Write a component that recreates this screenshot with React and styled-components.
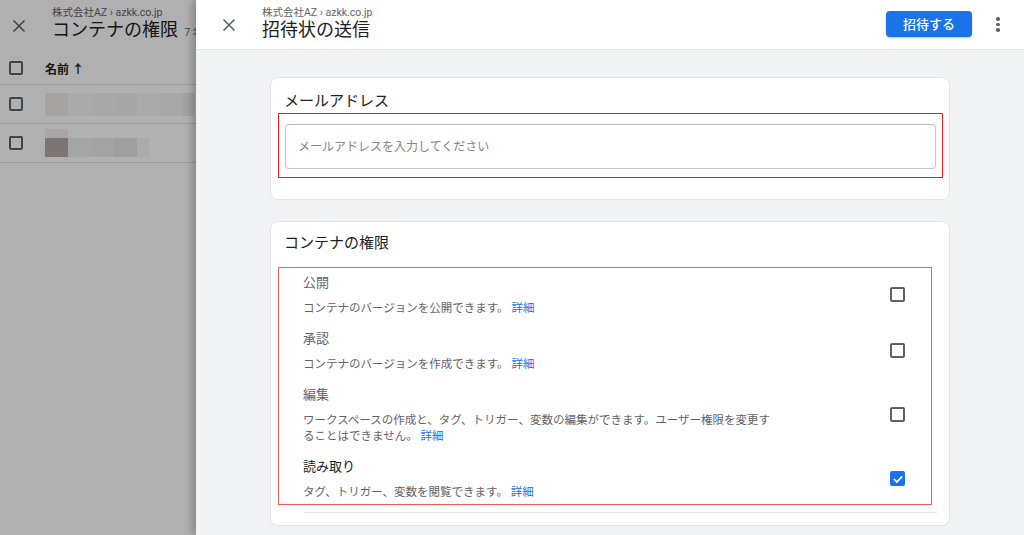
import React from 'react'
import styled, { createGlobalStyle } from 'styled-components'

const GlobalStyle = createGlobalStyle`
    html, body {
        margin: 0;
        padding: 0;
    }
    body {
        font-family: Roboto, "Noto Sans CJK JP", sans-serif;
        color: #202124;
    }
`

const permissions = [
    { title: '公開', desc: 'コンテナのバージョンを公開できます。', checked: false },
    { title: '承認', desc: 'コンテナのバージョンを作成できます。', checked: false },
    {
        title: '編集',
        desc: 'ワークスペースの作成と、タグ、トリガー、変数の編集ができます。ユーザー権限を変更することはできません。',
        checked: false,
    },
    { title: '読み取り', desc: 'タグ、トリガー、変数を閲覧できます。', checked: true },
]

const rowOne = [
    { w: 23, c: '#f3eded' },
    { w: 23, c: '#f6f6f6' },
    { w: 23, c: '#f3f3f3' },
    { w: 23, c: '#f1f1f1' },
    { w: 23, c: '#f6f6f6' },
    { w: 22, c: '#f2f2f2' },
    { w: 13, c: '#ececec' },
]

const rowTwo = [
    { w: 23, c: '#b5aaa8' },
    { w: 23, c: '#efefef' },
    { w: 23, c: '#ededed' },
    { w: 23, c: '#e6e6e6' },
    { w: 12, c: '#f7f7f7' },
]

const CloseIcon = ({ color }) => (
    <svg width="14" height="14" viewBox="0 0 14 14">
        <path d="M1.5 1.5 L12.5 12.5 M12.5 1.5 L1.5 12.5" stroke={color} strokeWidth="1.6" />
    </svg>
)

const App = () => {
    return (
        <Screen>
            <GlobalStyle />
            <BackPage>
                <BackHeader>
                    <IconButton>
                        <CloseIcon color="#5f6368" />
                    </IconButton>
                    <HeadText>
                        <Crumb>株式会社AZ › azkk.co.jp</Crumb>
                        <Title>
                            コンテナの権限 <Count>7 名</Count>
                        </Title>
                    </HeadText>
                </BackHeader>
                <TableHead>
                    <SmallBox />
                    <ColName>名前 ↑</ColName>
                </TableHead>
                <TableRow>
                    <SmallBox />
                    <Mosaic>
                        {rowOne.map((cell, i) => (
                            <Cell key={i} $w={cell.w} $h={23} $c={cell.c} />
                        ))}
                    </Mosaic>
                </TableRow>
                <TableRow>
                    <SmallBox />
                    <MosaicStack>
                        <Cell $w={23} $h={9} $c="#f7f0ef" />
                        <Mosaic>
                            {rowTwo.map((cell, i) => (
                                <Cell key={i} $w={cell.w} $h={19} $c={cell.c} />
                            ))}
                        </Mosaic>
                    </MosaicStack>
                </TableRow>
            </BackPage>

            <Scrim />

            <Drawer>
                <DrawerHeader>
                    <IconButton>
                        <CloseIcon color="#5f6368" />
                    </IconButton>
                    <HeadText>
                        <Crumb>株式会社AZ › azkk.co.jp</Crumb>
                        <Title>招待状の送信</Title>
                    </HeadText>
                    <Spacer />
                    <PrimaryButton>招待する</PrimaryButton>
                    <Kebab>
                        <Dot />
                        <Dot />
                        <Dot />
                    </Kebab>
                </DrawerHeader>

                <DrawerBody>
                    <Card>
                        <CardTitle $top={14}>メールアドレス</CardTitle>
                        <Highlight $color="#ff1a1a" $margin="2px 6px 21px 7px" $padding="10px 6px 8px 6px">
                            <EmailInput placeholder="メールアドレスを入力してください" />
                        </Highlight>
                    </Card>

                    <Card>
                        <CardTitle $top={12}>コンテナの権限</CardTitle>
                        <Highlight $color="#f45b5b" $margin="14px 17px 0 7px" $padding="5px 26px 4px 24px">
                            <PermList>
                                {permissions.map((p) => (
                                    <PermRow key={p.title}>
                                        <PermText>
                                            <PermTitle $active={p.checked}>{p.title}</PermTitle>
                                            <PermDesc>
                                                {p.desc} <Link>詳細</Link>
                                            </PermDesc>
                                        </PermText>
                                        <Checkbox $checked={p.checked}>
                                            {p.checked && (
                                                <svg width="12" height="12" viewBox="0 0 12 12">
                                                    <path
                                                        d="M2 6.2 L4.8 9 L10.2 3.4"
                                                        fill="none"
                                                        stroke="#fff"
                                                        strokeWidth="1.7"
                                                    />
                                                </svg>
                                            )}
                                        </Checkbox>
                                    </PermRow>
                                ))}
                            </PermList>
                        </Highlight>
                        <Divider />
                    </Card>
                </DrawerBody>
            </Drawer>
        </Screen>
    )
}

const Screen = styled.div`
    position: relative;
    width: 1024px;
    height: 535px;
    overflow: hidden;
    background: #ffffff;
`

const BackPage = styled.div`
    display: flex;
    flex-direction: column;
    width: 100%;
    height: 100%;
    background: #ffffff;
`

const BackHeader = styled.div`
    display: flex;
    align-items: center;
    height: 52px;
    padding-left: 5px;
`

const IconButton = styled.div`
    display: flex;
    align-items: center;
    justify-content: center;
    width: 28px;
    height: 28px;
    margin-right: 19px;
`

const HeadText = styled.div`
    display: flex;
    flex-direction: column;
    padding-bottom: 2px;
`

const Crumb = styled.div`
    font-size: 10.5px;
    line-height: 12px;
    color: #5f6368;
    white-space: nowrap;
`

const Title = styled.div`
    font-size: 18px;
    line-height: 22px;
    color: #202124;
    white-space: nowrap;
`

const Count = styled.span`
    font-size: 10px;
    color: #5f6368;
    margin-left: 2px;
`

const TableHead = styled.div`
    display: flex;
    align-items: center;
    height: 32px;
    padding-left: 9px;
    border-bottom: 1px solid #e0e0e0;
`

const TableRow = styled.div`
    display: flex;
    align-items: center;
    height: 38px;
    padding-left: 9px;
    border-bottom: 1px solid #e0e0e0;
`

const SmallBox = styled.div`
    width: 14px;
    height: 14px;
    box-sizing: border-box;
    border: 2px solid #5f6368;
    border-radius: 2px;
    margin-right: 22px;
`

const ColName = styled.div`
    font-size: 12px;
    font-weight: 700;
    color: #202124;
`

const Mosaic = styled.div`
    display: flex;
`

const MosaicStack = styled.div`
    display: flex;
    flex-direction: column;
`

const Cell = styled.div`
    width: ${(p) => p.$w}px;
    height: ${(p) => p.$h}px;
    background: ${(p) => p.$c};
`

const Scrim = styled.div`
    position: absolute;
    inset: 0;
    background: rgba(0, 0, 0, 0.31);
`

const Drawer = styled.div`
    position: absolute;
    top: 0;
    right: 0;
    bottom: 0;
    width: 828px;
    display: flex;
    flex-direction: column;
    background: #f1f3f4;
    box-shadow: -3px 0 9px rgba(0, 0, 0, 0.28);
`

const DrawerHeader = styled.div`
    display: flex;
    align-items: center;
    height: 50px;
    box-sizing: border-box;
    padding: 0 14px 0 19px;
    background: #ffffff;
    border-bottom: 1px solid #e3e5e7;
`

const Spacer = styled.div`
    flex: 1;
`

const PrimaryButton = styled.button`
    width: 86px;
    height: 26px;
    margin-top: -2px;
    border: none;
    border-radius: 4px;
    background: #1a73e8;
    color: #ffffff;
    font-family: Roboto, "Noto Sans CJK JP", sans-serif;
    font-size: 13px;
    font-weight: 500;
    box-shadow: 0 1px 2px rgba(60, 64, 67, 0.3);
    cursor: pointer;
`

const Kebab = styled.div`
    display: flex;
    flex-direction: column;
    align-items: center;
    gap: 2px;
    width: 24px;
    margin-left: 14px;
`

const Dot = styled.div`
    width: 3.5px;
    height: 3.5px;
    border-radius: 50%;
    background: #5f6368;
`

const DrawerBody = styled.div`
    display: flex;
    flex-direction: column;
    gap: 21px;
    padding: 27px 74px 0;
`

const Card = styled.div`
    display: flex;
    flex-direction: column;
    background: #ffffff;
    border: 1px solid #e2e4e6;
    border-radius: 8px;
`

const CardTitle = styled.div`
    padding: ${(p) => p.$top - 1}px 14px 0 13px;
    font-size: 15px;
    line-height: 20px;
    color: #202124;
`

const Highlight = styled.div`
    margin: ${(p) => p.$margin};
    padding: ${(p) => p.$padding};
    border: 1px solid ${(p) => p.$color};
`

const EmailInput = styled.input`
    display: block;
    width: 100%;
    height: 45px;
    box-sizing: border-box;
    padding: 0 12px;
    border: 1px solid #c4c7c9;
    border-top-color: #b8babd;
    border-radius: 4px;
    font-family: Roboto, "Noto Sans CJK JP", sans-serif;
    font-size: 12px;
    color: #202124;
    outline: none;

    &::placeholder {
        color: #80868b;
    }
`

const PermList = styled.div`
    display: flex;
    flex-direction: column;
    gap: 13px;
`

const PermRow = styled.div`
    display: flex;
    align-items: center;
    justify-content: space-between;
`

const PermText = styled.div`
    display: flex;
    flex-direction: column;
    gap: 7px;
    max-width: 476px;
`

const PermTitle = styled.div`
    font-size: 13px;
    line-height: 20px;
    color: ${(p) => (p.$active ? '#202124' : '#5f6368')};
`

const PermDesc = styled.div`
    font-size: 11.5px;
    line-height: 16px;
    color: #5f6368;
`

const Link = styled.a`
    color: #1a73e8;
    cursor: pointer;
`

const Checkbox = styled.div`
    display: flex;
    align-items: center;
    justify-content: center;
    width: 15px;
    height: 15px;
    box-sizing: border-box;
    border: ${(p) => (p.$checked ? 'none' : '2px solid #5f6368')};
    border-radius: 2px;
    background: ${(p) => (p.$checked ? '#1a73e8' : 'transparent')};
`

const Divider = styled.div`
    height: 1px;
    margin: 7px 12px 12px 33px;
    background: #e3e5e7;
`

export default App
